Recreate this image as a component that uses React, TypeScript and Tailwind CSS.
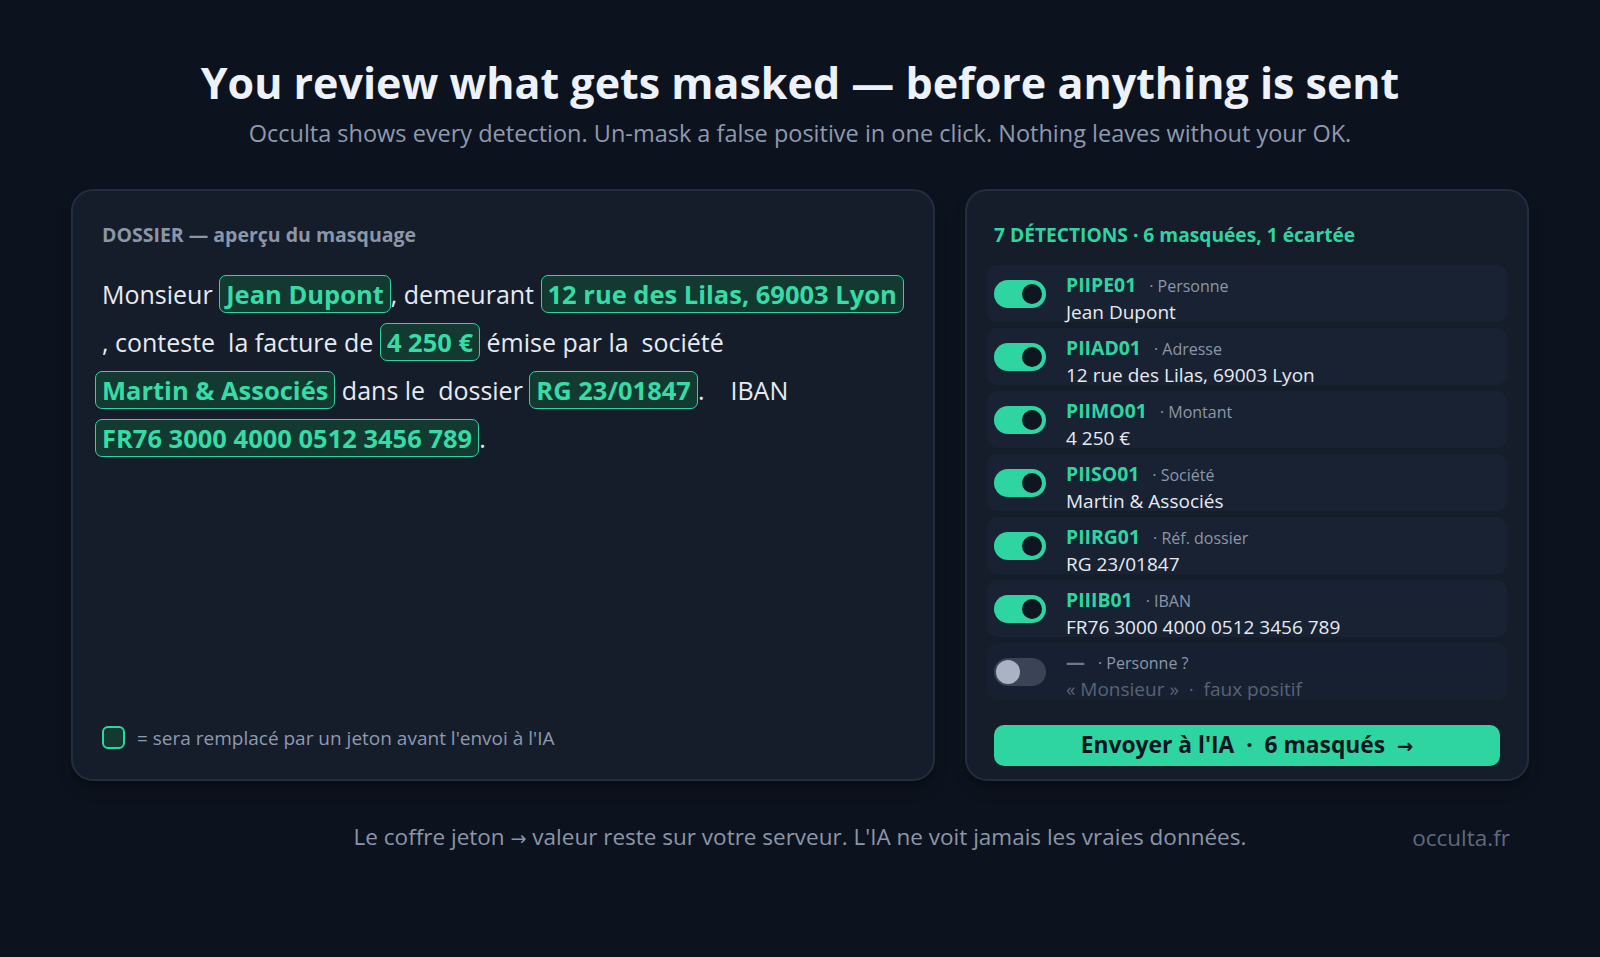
const font = { fontFamily: "'Open Sans', 'Noto Sans', sans-serif" };

function Arrow() {
  return <span style={{ fontFamily: "'DejaVu Sans', sans-serif" }} className="text-[0.85em]">→</span>;
}

function Chip({ children, first }: { children: React.ReactNode; first?: boolean }) {
  return (
    <span
      className={`inline-block rounded-[7px] border border-[#2fd5a1] bg-[#123a31] px-[6px] text-[25.5px] leading-[36px] font-bold text-[#37dba6] ${first ? "-ml-[7px]" : ""}`}
    >
      {children}
    </span>
  );
}

function Toggle({ on }: { on: boolean }) {
  return on ? (
    <div className="flex h-[28px] w-[52px] shrink-0 items-center justify-end rounded-full bg-[#2fd5a1] pr-[2px]">
      <div className="h-[24px] w-[24px] rounded-full border-2 border-[#2fd5a1] bg-[#0e1621]" />
    </div>
  ) : (
    <div className="flex h-[28px] w-[52px] shrink-0 items-center rounded-full bg-[#3a4456] pl-[2px]">
      <div className="h-[24px] w-[24px] rounded-full bg-[#a9b3c4]" />
    </div>
  );
}

const detections = [
  { token: "PIIPE01", kind: "Personne", value: "Jean Dupont" },
  { token: "PIIAD01", kind: "Adresse", value: "12 rue des Lilas, 69003 Lyon" },
  { token: "PIIMO01", kind: "Montant", value: "4 250 €" },
  { token: "PIISO01", kind: "Société", value: "Martin & Associés" },
  { token: "PIIRG01", kind: "Réf. dossier", value: "RG 23/01847" },
  { token: "PIIIB01", kind: "IBAN", value: "FR76 3000 4000 0512 3456 789" },
];

export default function App() {
  return (
    <div style={font} className="min-h-screen bg-[#0d131e] text-white">
      <div className="mx-auto w-[1458px] pt-[57px]">
        {/* Heading */}
        <h1 className="text-center text-[43px] font-bold leading-[52px] text-[#edf2fa]">
          You review what gets masked — before anything is sent
        </h1>
        <p className="mt-[9px] text-center text-[23.5px] leading-[30px] text-[#8e9ab0]">
          Occulta shows every detection. Un-mask a false positive in one click. Nothing leaves without your OK.
        </p>

        <div className="mt-[41px] flex gap-[30px]">
          {/* Dossier preview */}
          <div className="flex h-[592px] flex-1 flex-col rounded-[22px] border-2 border-[#222d3f] bg-[#151d2b] px-[29px] pt-[32px] pb-[27px] shadow-lg shadow-black/30">
            <div className="text-[19.5px] font-bold leading-[24px] text-[#8b96a9]">
              DOSSIER — aperçu du masquage
            </div>
            <div className="mt-[23px] whitespace-pre text-[25px] leading-[48px] text-[#e6ebf2]">
              <div>
                Monsieur <Chip>Jean Dupont</Chip>, demeurant <Chip>12 rue des Lilas, 69003 Lyon</Chip>
              </div>
              <div>
                , conteste  la facture de <Chip>4 250 €</Chip> émise par la  société
              </div>
              <div>
                <Chip first>Martin &amp; Associés</Chip> dans le  dossier <Chip>RG 23/01847</Chip>.    IBAN
              </div>
              <div>
                <Chip first>FR76 3000 4000 0512 3456 789</Chip>.
              </div>
            </div>
            <div className="mt-auto flex items-center gap-[12px]">
              <span className="h-[23px] w-[23px] rounded-[6px] border-2 border-[#2fd5a1] bg-[#123a31]" />
              <span className="text-[19px] text-[#8e9ab0]">= sera remplacé par un jeton avant l'envoi à l'IA</span>
            </div>
          </div>

          {/* Detections */}
          <div className="flex h-[592px] w-[564px] flex-col rounded-[22px] border-2 border-[#222d3f] bg-[#151d2b] px-[20px] pt-[32px] pb-[13px] shadow-lg shadow-black/30">
            <div className="px-[7px] text-[19.2px] font-bold leading-[24px] text-[#2fd5a1]">
              7 DÉTECTIONS · 6 masquées, 1 écartée
            </div>
            <div className="mt-[18px] flex flex-col gap-[6px]">
              {detections.map((d) => (
                <div key={d.token} className="flex h-[57px] gap-[20px] rounded-[10px] bg-[#192232] px-[7px] pt-[7px]">
                  <div className="pt-[8px]">
                    <Toggle on />
                  </div>
                  <div className="flex flex-col">
                    <div className="flex items-baseline gap-[13px] leading-[25px]">
                      <span className="text-[19.4px] font-bold text-[#2fd5a1]">{d.token}</span>
                      <span className="text-[16px] text-[#8b96a9]">· {d.kind}</span>
                    </div>
                    <div className="text-[19px] leading-[26px] text-[#e6ebf2]">{d.value}</div>
                  </div>
                </div>
              ))}
              <div className="flex h-[57px] gap-[20px] rounded-[10px] bg-[#172030] px-[7px] pt-[7px]">
                <div className="pt-[8px]">
                  <Toggle on={false} />
                </div>
                <div className="flex flex-col">
                  <div className="flex items-baseline gap-[13px] leading-[25px]">
                    <span className="text-[19px] font-bold text-[#6c778a]">—</span>
                    <span className="text-[16px] text-[#8b96a9]">· Personne ?</span>
                  </div>
                  <div className="whitespace-pre text-[19px] leading-[26px] text-[#586376]">
                    « Monsieur »  ·  faux positif
                  </div>
                </div>
              </div>
            </div>
            <button className="mx-[7px] mt-auto h-[41px] rounded-[10px] bg-[#2fd5a1] whitespace-pre text-[22.8px] font-bold text-[#0b1520]">
              Envoyer à l'IA  ·  6 masqués  <Arrow />
            </button>
          </div>
        </div>

        {/* Footer */}
        <div className="mt-[41px] grid grid-cols-[1fr_auto_1fr] items-center text-[22.5px] leading-[30px]">
          <div />
          <div className="text-[#8b96a9]">
            Le coffre jeton <Arrow /> valeur reste sur votre serveur. L'IA ne voit jamais les vraies données.
          </div>
          <div className="pr-[19px] text-right text-[#5f6a7d]">occulta.fr</div>
        </div>
      </div>
    </div>
  );
}
